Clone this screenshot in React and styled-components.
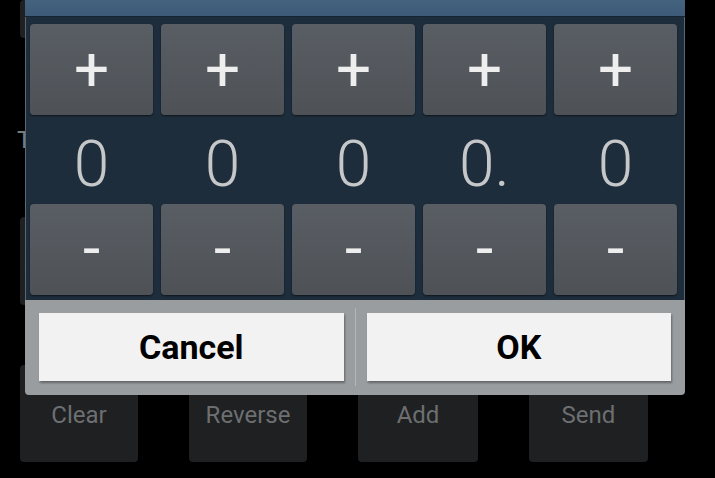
import React from 'react';
import styled, {createGlobalStyle} from 'styled-components';

const GlobalStyle = createGlobalStyle`
  html, body {
    margin: 0;
    padding: 0;
    background: #000;
  }

  body {
    font-family: Roboto, "Liberation Sans", sans-serif;
  }
`

const Screen = styled.div`
  position: relative;
  width: 715px;
  height: 478px;
  overflow: hidden;
  background: #000;
`

const Page = styled.div`
  display: flex;
  flex-direction: column;
  padding-left: 20px;
`

const KeyRow = styled.div`
  display: flex;
  gap: 51px;
  margin-top: ${props => props.top || 0}px;
`

const Key = styled.div`
  width: ${props => props.w || 118}px;
  height: ${props => props.h || 97}px;
  background: #1e2022;
  border-radius: 4px;
  display: flex;
  justify-content: center;
  padding-top: 36px;
  box-sizing: border-box;
  font-size: 24px;
  color: #6d6f71;
`

const Label = styled.div`
  margin: 88px 0 0 -3px;
  font-size: 24px;
  line-height: 28px;
  color: #7b7b7b;
`

const Dialog = styled.div`
  position: absolute;
  left: 25px;
  top: 0;
  width: 660px;
  height: 395px;
  display: flex;
  flex-direction: column;
  border-radius: 0 0 4px 4px;
  overflow: hidden;
`

const Title = styled.div`
  height: 16px;
  background: linear-gradient(#44637f, #3d5b78);
  border-bottom: 1px solid #172330;
`

const Body = styled.div`
  background: #1e2d3c;
  padding: 7px 6px 5px 5px;
  display: grid;
  grid-template-columns: repeat(5, 123px);
  grid-template-rows: 91px 89px 91px;
  column-gap: 8px;
  box-shadow: inset 1px 0 0 rgba(130, 140, 150, 0.6), inset -1px 0 0 rgba(130, 140, 150, 0.6);
`

const StepButton = styled.div`
  background: linear-gradient(#595e64, #4e5257);
  border-radius: 4px;
  box-shadow: 0 1px 2px rgba(0, 0, 0, 0.55);
  display: flex;
  align-items: center;
  justify-content: center;
  color: #eeeeee;
  font-size: 62px;
  line-height: 1;
  padding-bottom: ${props => props.minus ? 4 : 2}px;
  box-sizing: border-box;
`

const Digit = styled.div`
  display: flex;
  align-items: center;
  justify-content: center;
  color: #c6c7c8;
  font-size: 64px;
  font-weight: 300;
  line-height: 1;
  padding-top: 10px;
`

const Actions = styled.div`
  flex: 1;
  background: #999d9f;
  display: flex;
  align-items: center;
  padding: 0 14px 1px 14px;
`

const ActionButton = styled.div`
  flex: 1;
  height: 68px;
  background: #f2f2f2;
  box-shadow: 1px 2px 2px rgba(0, 0, 0, 0.35);
  display: flex;
  align-items: center;
  justify-content: center;
  color: #000;
  font-size: 34px;
  font-weight: 700;
`

const Divider = styled.div`
  width: 1px;
  height: 78px;
  margin: 0 11px;
  background: #b3b6b8;
`

const digits = ['0', '0', '0', '0.', '0'];

export default function App() {
    return (
        <Screen>
            <GlobalStyle/>
            <Page>
                <KeyRow>
                    <Key h={38}/>
                    <Key h={38}/>
                    <Key h={38}/>
                    <Key h={38}/>
                </KeyRow>
                <Label>Total</Label>
                <KeyRow top={63}>
                    <Key h={88}/>
                    <Key h={88}/>
                    <Key h={88}/>
                    <Key h={88}/>
                </KeyRow>
                <KeyRow top={60}>
                    <Key>Clear</Key>
                    <Key>Reverse</Key>
                    <Key w={120}>Add</Key>
                    <Key w={119}>Send</Key>
                </KeyRow>
            </Page>
            <Dialog>
                <Title/>
                <Body>
                    {digits.map((d, i) => <StepButton key={'p' + i}>+</StepButton>)}
                    {digits.map((d, i) => <Digit key={'d' + i}>{d}</Digit>)}
                    {digits.map((d, i) => <StepButton minus key={'m' + i}>-</StepButton>)}
                </Body>
                <Actions>
                    <ActionButton>Cancel</ActionButton>
                    <Divider/>
                    <ActionButton>OK</ActionButton>
                </Actions>
            </Dialog>
        </Screen>
    );
}
